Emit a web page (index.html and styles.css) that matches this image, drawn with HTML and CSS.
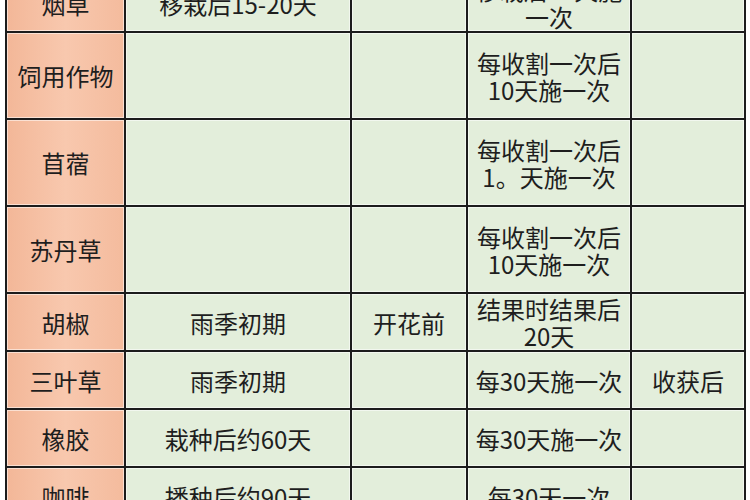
FILE: index.html
```html
<!DOCTYPE html>
<html lang="zh">
<head>
<meta charset="utf-8">
<link rel="stylesheet" href="styles.css">
</head>
<body>
<table class="fert">
  <colgroup>
    <col class="c1"><col class="c2"><col class="c3"><col class="c4"><col class="c5">
  </colgroup>
  <tbody>
    <tr class="short">
      <td class="crop">烟草</td>
      <td>移栽后15-20天</td>
      <td></td>
      <td>移栽后30天施<br>一次</td>
      <td></td>
    </tr>
    <tr class="tall">
      <td class="crop">饲用作物</td>
      <td></td>
      <td></td>
      <td>每收割一次后<br>10天施一次</td>
      <td></td>
    </tr>
    <tr class="tall">
      <td class="crop">苜蓿</td>
      <td></td>
      <td></td>
      <td>每收割一次后<br>1。天施一次</td>
      <td></td>
    </tr>
    <tr class="tall">
      <td class="crop">苏丹草</td>
      <td></td>
      <td></td>
      <td>每收割一次后<br>10天施一次</td>
      <td></td>
    </tr>
    <tr class="short">
      <td class="crop">胡椒</td>
      <td>雨季初期</td>
      <td>开花前</td>
      <td>结果时结果后<br>20天</td>
      <td></td>
    </tr>
    <tr class="short">
      <td class="crop">三叶草</td>
      <td>雨季初期</td>
      <td></td>
      <td>每30天施一次</td>
      <td>收获后</td>
    </tr>
    <tr class="short">
      <td class="crop">橡胶</td>
      <td>栽种后约60天</td>
      <td></td>
      <td>每30天施一次</td>
      <td></td>
    </tr>
    <tr class="short">
      <td class="crop">咖啡</td>
      <td>播种后约90天</td>
      <td></td>
      <td>每30天一次</td>
      <td></td>
    </tr>
  </tbody>
</table>
</body>
</html>
```

FILE: styles.css
```css
html, body {
  margin: 0;
  padding: 0;
  background: #ffffff;
  overflow: hidden;
}

.fert {
  margin: -27px 0 0 5px;
  width: 741px;
  table-layout: fixed;
  border-collapse: collapse;
  font-family: "Noto Sans CJK SC", "Noto Sans", sans-serif;
  font-size: 24px;
  line-height: 27px;
  color: #1e1e1e;
}

.c1 { width: 119px; }
.c2 { width: 226px; }
.c3 { width: 116px; }
.c4 { width: 164px; }
.c5 { width: 114px; }

.fert td {
  border: 2px solid #1c1c1c;
  background: #e3eedb;
  text-align: center;
  vertical-align: middle;
  padding: 0;
  box-shadow: inset 0 0 0 1px rgba(255, 255, 255, 0.55);
  white-space: nowrap;
}

.fert td.crop {
  background: linear-gradient(to right, #f3b798, #f8c8ae 50%, #f4bb9d);
}

.tall { height: 87px; }
.short { height: 58px; }
```
